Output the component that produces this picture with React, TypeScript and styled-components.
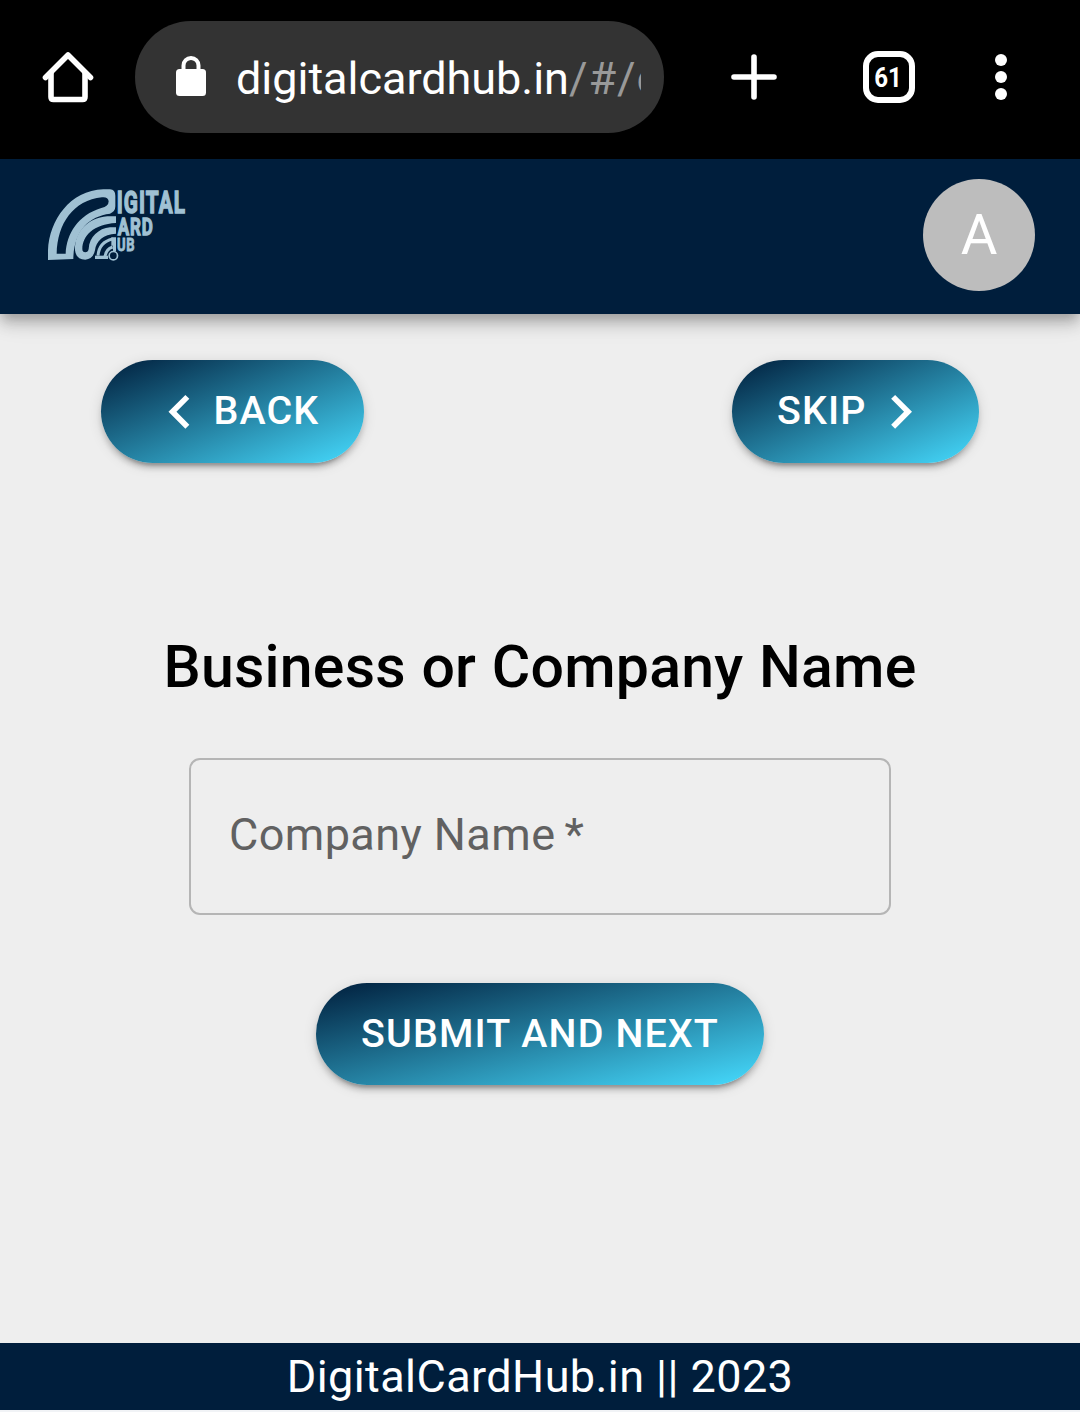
import React from "react";
import styled, { createGlobalStyle } from "styled-components";

const GlobalStyle = createGlobalStyle`
  *, *::before, *::after { box-sizing: border-box; }
  body {
    margin: 0;
    background: #eeeeee;
    font-family: Roboto, "Liberation Sans", sans-serif;
  }
`;

const Screen = styled.div`
  display: flex;
  flex-direction: column;
  width: 1080px;
  height: 1412px;
  overflow: hidden;
  background: #eeeeee;
`;

const BrowserBar = styled.div`
  display: flex;
  align-items: center;
  flex: none;
  height: 159px;
  padding: 0 45px 5px 34px;
  background: #000;
`;

const Icon = styled.svg<{ $size: number }>`
  display: block;
  flex: none;
  width: ${(p) => p.$size}px;
  height: ${(p) => p.$size}px;
`;

const AddressBar = styled.div`
  display: flex;
  align-items: center;
  width: 529px;
  height: 112px;
  margin-left: 33px;
  padding: 0 23px 0 32px;
  border-radius: 56px;
  background: #333333;
`;

const Url = styled.div`
  flex: 1;
  margin-left: 21px;
  padding-top: 3px;
  overflow: hidden;
  white-space: nowrap;
  color: #fff;
  font-size: 45px;
  line-height: 60px;
  letter-spacing: -0.03px;
`;

const UrlPath = styled.span`
  color: #999999;
  letter-spacing: 0.9px;
`;

const BrowserActions = styled.div`
  display: flex;
  flex: 1;
  align-items: center;
  justify-content: space-between;
  margin-left: 56px;
`;

const TabCount = styled.div`
  display: flex;
  align-items: center;
  justify-content: center;
  width: 52px;
  height: 52px;
  margin-left: 22px;
  border: 6px solid #fff;
  border-radius: 15px;
  color: #fff;
  font-size: 28px;
  font-weight: 700;
`;

const Narrow = styled.span`
  transform: scaleX(0.86);
`;

const Header = styled.header`
  display: flex;
  flex: none;
  align-items: flex-start;
  justify-content: space-between;
  height: 155px;
  padding: 20px 45px 0 48px;
  background: #001e3c;
  box-shadow: 0 5.6px 11.2px -2.8px rgba(0, 0, 0, 0.2),
    0 11.2px 14px 0 rgba(0, 0, 0, 0.14), 0 2.8px 28px 0 rgba(0, 0, 0, 0.12);
`;

const Logo = styled.svg`
  display: block;
  width: 137px;
  height: 72px;
  margin-top: 10px;
  overflow: visible;
`;

const Avatar = styled.div`
  display: flex;
  align-items: center;
  justify-content: center;
  width: 112px;
  height: 112px;
  border-radius: 50%;
  background: #bdbdbd;
  color: #fff;
  font-size: 56.25px;
  line-height: 1;
`;

const Main = styled.main`
  display: flex;
  flex: 1;
  flex-direction: column;
  align-items: center;
`;

const StepNav = styled.nav`
  display: flex;
  justify-content: space-between;
  width: 878px;
  margin-top: 46px;
`;

const Button = styled.button`
  display: inline-flex;
  align-items: center;
  justify-content: center;
  height: 103px;
  padding: 0 45px;
  border: 0;
  border-radius: 52px;
  background: linear-gradient(to right bottom, #001e3c, #46dcff);
  box-shadow: 0 8.4px 2.8px -5.6px rgba(0, 0, 0, 0.2),
    0 5.6px 5.6px 0 rgba(0, 0, 0, 0.14), 0 2.8px 14px 0 rgba(0, 0, 0, 0.12);
  color: #fff;
  font-family: inherit;
  font-size: 39.4px;
  font-weight: 500;
  letter-spacing: 0.02857em;
  line-height: 1.75;
  white-space: nowrap;
`;

const SubmitButton = styled(Button)`
  height: 102px;
`;

const Title = styled.h1`
  margin: 169px 0 0;
  color: #000;
  font-size: 59px;
  font-weight: 500;
  line-height: 70px;
  letter-spacing: 0.2px;
  word-spacing: 0.8px;
  white-space: nowrap;
`;

const Field = styled.label`
  display: flex;
  align-items: center;
  width: 702px;
  height: 157px;
  margin: 56px 0 68px;
  padding: 0 38px 4px;
  border: 2px solid #b5b5b5;
  border-radius: 11px;
  color: #616161;
  font-size: 45px;
  letter-spacing: 0.00938em;
`;

const Required = styled.span`
  margin-left: 9px;
`;

const Footer = styled.footer`
  display: flex;
  flex: none;
  align-items: center;
  justify-content: center;
  height: 69px;
  border-bottom: 2px solid #f1f3f6;
  background: #001e3c;
  color: #fff;
  font-size: 45px;
  letter-spacing: 0.00938em;
`;

const HomeIcon = () => (
  <Icon $size={68} viewBox="0 0 68 68" fill="none" stroke="#fff" strokeWidth="5.600" strokeLinejoin="round">
    <path d="M11.500 34.500 34 12l22.500 22.500" strokeLinecap="round" />
    <path d="M17 30V54q0 2.500 2.500 2.500H48.500q2.500 0 2.500-2.500V30" />
  </Icon>
);

const LockIcon = () => (
  <Icon $size={48} viewBox="0 0 48 48">
    <rect x="9" y="16" width="30" height="27" rx="3.500" fill="#fff" />
    <path d="M16.500 18v-5.500a7.500 7.500 0 0 1 15 0v5.500" fill="none" stroke="#fff" strokeWidth="4" />
  </Icon>
);

const PlusIcon = () => (
  <Icon $size={68} viewBox="0 0 68 68" stroke="#fff" strokeWidth="5.600" strokeLinecap="round">
    <path d="M14 34h40M34 14v40" />
  </Icon>
);

const MoreIcon = () => (
  <Icon $size={68} viewBox="0 0 68 68" fill="#fff">
    <circle cx="34" cy="17" r="6" />
    <circle cx="34" cy="34" r="6" />
    <circle cx="34" cy="51" r="6" />
  </Icon>
);

const ChevronLeft = () => (
  <Icon $size={67.5} viewBox="0 0 24 24" fill="#fff">
    <path d="M15.410 7.410 14 6l-6 6 6 6 1.410-1.410L10.830 12z" />
  </Icon>
);

const ChevronRight = () => (
  <Icon $size={67.5} viewBox="0 0 24 24" fill="#fff">
    <path d="M10 6 8.590 7.410 13.170 12l-4.580 4.590L10 18l6-6z" />
  </Icon>
);

const BrandLogo = () => (
  <Logo viewBox="54 56 411 216" role="img" aria-label="Digital Card Hub">
    {/* nested arches: outer D, middle C, inner H with its wheel */}
    <g fill="#a0c1d3">
      <path
        fillRule="evenodd"
        d="M54 269V240C58 150 120 60 220 57H240Q256 58 256 76V108Q256 124 240 130C176 138 134 180 130 262V266ZM80 250H107C110 190 144 134 214 113Q236 108 236 93Q234 79 216 81C130 90 82 160 80 250Z"
      />
      <path
        fillRule="evenodd"
        d="M258 138H232C170 144 134 186 135 240Q138 268 166 268Q190 266 195 240C198 212 220 192 258 190V171H240C206 174 178 200 176 236Q174 246 166 246Q157 246 157 236C158 196 190 162 258 158Z"
      />
      <path d="M244 201h14v42h-9v-17h-5z" />
    </g>
    <g fill="none" stroke="#a0c1d3">
      <path d="M248 206C222 212 206 230 204 256M248 230Q228 236 225 259" strokeWidth="9" />
      <path d="M195 261H234" strokeWidth="10" />
      <circle cx="250" cy="256" r="12.500" strokeWidth="5" />
    </g>
    <g fill="#a0c1d3" stroke="#a0c1d3" fontFamily="Roboto, sans-serif" fontWeight="700">
      <text x="260" y="127" fontSize="95" strokeWidth="4.500" letterSpacing="5" textLength="208" lengthAdjust="spacingAndGlyphs">IGITAL</text>
      <text x="263" y="193" fontSize="74" strokeWidth="4" letterSpacing="4" textLength="108" lengthAdjust="spacingAndGlyphs">ARD</text>
      <text x="261" y="242" fontSize="53" strokeWidth="2.500" letterSpacing="3" textLength="55" lengthAdjust="spacingAndGlyphs">UB</text>
    </g>
  </Logo>
);

export default function App() {
  return (
    <>
      <GlobalStyle />
      <Screen>
        <BrowserBar>
          <HomeIcon />
          <AddressBar>
            <LockIcon />
            <Url>
              digitalcardhub.in<UrlPath>/#/c</UrlPath>
            </Url>
          </AddressBar>
          <BrowserActions>
            <PlusIcon />
            <TabCount>
              <Narrow>61</Narrow>
            </TabCount>
            <MoreIcon />
          </BrowserActions>
        </BrowserBar>
        <Header>
          <BrandLogo />
          <Avatar>A</Avatar>
        </Header>
        <Main>
          <StepNav>
            <Button>
              <ChevronLeft />
              BACK
            </Button>
            <Button>
              SKIP
              <ChevronRight />
            </Button>
          </StepNav>
          <Title>Business or Company Name</Title>
          <Field>
            Company Name<Required>*</Required>
          </Field>
          <SubmitButton>SUBMIT AND NEXT</SubmitButton>
        </Main>
        <Footer>DigitalCardHub.in || 2023</Footer>
      </Screen>
    </>
  );
}
